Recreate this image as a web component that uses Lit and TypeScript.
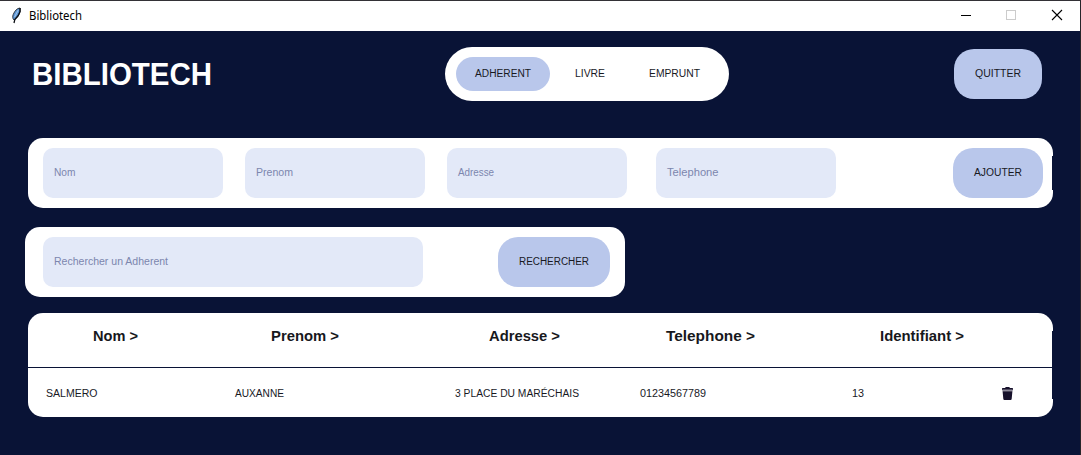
import { LitElement, html, css, svg } from "lit";
import { customElement } from "lit/decorators.js";

interface Label { text: string; x: number; w: number; }

// x: gap before the label, w: rendered width of the label
const tabs: Label[] = [
  { text: "LIVRE", x: 25, w: 30 },
  { text: "EMPRUNT", x: 44, w: 51 },
];
const fields: Label[] = [
  { text: "Nom", x: 15, w: 21.5 },
  { text: "Prenom", x: 22, w: 37 },
  { text: "Adresse", x: 22, w: 36 },
  { text: "Telephone", x: 29, w: 51.5 },
];
const heads: Label[] = [
  { text: "Nom >", x: 65, w: 45 },
  { text: "Prenom >", x: 243, w: 68 },
  { text: "Adresse >", x: 461, w: 71 },
  { text: "Telephone >", x: 638, w: 89 },
  { text: "Identifiant >", x: 852, w: 84 },
];
const cells: Label[] = [
  { text: "SALMERO", x: 18, w: 51.5 },
  { text: "AUXANNE", x: 207, w: 49 },
  { text: "3 PLACE DU MARÉCHAIS", x: 427, w: 124 },
  { text: "01234567789", x: 612, w: 66 },
  { text: "13", x: 824, w: 12 },
];

// Space between the end of the previous label and the start of this one
const gapBefore = (list: Label[], i: number) =>
  i === 0 ? list[0].x : list[i].x - list[i - 1].x - list[i - 1].w;

const fit = (text: string, w: number, cls: string) => svg`
  <svg class=${"fit " + cls} width=${Math.ceil(w)} height="20">
    <text x="0" y=${cls === "small" || cls === "hint" ? 13 : 14} textLength=${w} lengthAdjust="spacingAndGlyphs">${text}</text>
  </svg>`;

@customElement("app-root")
export class AppRoot extends LitElement {
  static styles = css`
    :host { display: block; width: 1081px; height: 455px; overflow: hidden; font-family: "Liberation Sans", Arial, sans-serif; }
    .window { box-sizing: border-box; width: 1081px; height: 455px; background: #091336; border-right: 1px solid #27262a; border-top: 1px solid #333136; display: flex; flex-direction: column; }
    svg { display: block; flex: none; }
    .fit { overflow: visible; }
    .fit text { white-space: pre; }
    .small { font-size: 10px; fill: #18191f; }
    .hint { font-size: 10px; fill: #7c86ae; }
    .bold { font-size: 15px; font-weight: bold; fill: #17181c; }
    .caption { font-size: 12px; font-family: "Noto Sans", "Open Sans", sans-serif; fill: #000; }
    .title { font-size: 31px; font-weight: bold; fill: #fff; }
    .bar { height: 30px; flex: none; background: #fff; display: flex; align-items: center; padding-left: 8px; }
    .bar .caption { margin-left: 5px; }
    .controls { margin-left: auto; }
    .header { height: 107px; flex: none; display: flex; align-items: flex-start; box-sizing: border-box; padding: 16px 38px 0 32px; }
    .brand { width: 413px; padding-top: 24px; }
    .tabs { box-sizing: border-box; width: 284px; height: 54px; border-radius: 27px; background: #fff; display: flex; align-items: center; padding-left: 11px; }
    .button { box-sizing: border-box; flex: none; height: 50px; border-radius: 20px; background: #b9c7eb; display: flex; align-items: center; justify-content: center; }
    .active { width: 94px; height: 34px; border-radius: 17px; }
    .quit { width: 88px; margin: 2px 0 0 auto; }
    .panel { position: relative; box-sizing: border-box; flex: none; background: #fff; border-radius: 15px; display: flex; align-items: center; }
    .notched::after { content: ""; position: absolute; top: 18px; right: 0; bottom: 18px; width: 1px; background: #091336; }
    .add { width: 1025px; height: 70px; margin-left: 28px; padding-right: 10px; }
    .search { width: 600px; height: 70px; margin: 19px 0 0 25px; padding: 0 15px 0 18px; }
    .field { box-sizing: border-box; flex: none; width: 180px; height: 50px; border-radius: 10px; background: #e3e9f8; display: flex; align-items: center; padding-left: 11px; }
    .wide { width: 380px; }
    .end { margin-left: auto; }
    .ajouter { width: 90px; }
    .rechercher { width: 112px; }
    .table { width: 1025px; height: 104px; margin: 16px 0 0 28px; flex-direction: column; align-items: stretch; }
    .row { display: flex; box-sizing: border-box; width: 1024px; }
    .heads { height: 55px; padding-top: 14px; border-bottom: 1px solid #091336; }
    .cells { height: 49px; padding-top: 16px; }
    .trash { margin: 3px 18px 0 138px; }
  `;

  private labels(list: Label[], cls: string) {
    return list.map((l, i) => html`<div style="margin-left:${gapBefore(list, i)}px;width:${l.w}px">${fit(l.text, l.w, cls)}</div>`);
  }

  render() {
    return html`
      <div class="window">
        <div class="bar">
          <svg width="16" height="18" viewBox="0 0 16 18">
            <path d="M12 1 C9 1.2 6.8 3.8 5.2 7.5 C4.4 9.8 4.5 11.5 6 13 C9 11.5 11 8.5 12 4.5 Z" fill="#5d96d4" stroke="#20262f" stroke-width=".9"/>
            <path d="M12.1 1 V4.5 Q10.8 9 6.8 12.6 L6 16" fill="none" stroke="#0c0f14" stroke-width="1.3"/>
            <path d="M10.2 3 L6.6 10" stroke="#a9cbee" stroke-width=".9"/>
          </svg>
          ${fit("Bibliotech", 53, "caption")}
          <svg class="controls" width="120" height="30" viewBox="960 1 120 30" fill="none" shape-rendering="crispEdges">
            <path d="M961 15.5 H971" stroke="#000"/>
            <rect x="1006.5" y="10.5" width="9" height="9" stroke="#ccc"/>
            <path d="M1052 10 L1062 20 M1062 10 L1052 20" stroke="#000" stroke-width="1.1" shape-rendering="auto"/>
          </svg>
        </div>
        <div class="header">
          <div class="brand">${fit("BIBLIOTECH", 180, "title")}</div>
          <div class="tabs">
            <div class="button active">${fit("ADHERENT", 56, "small")}</div>
            ${tabs.map(t => html`<div style="margin-left:${t.x}px;width:${t.w}px">${fit(t.text, t.w, "small")}</div>`)}
          </div>
          <div class="button quit">${fit("QUITTER", 46, "small")}</div>
        </div>
        <div class="panel add notched">
          ${fields.map(f => html`<div class="field" style="margin-left:${f.x}px">${fit(f.text, f.w, "hint")}</div>`)}
          <div class="button ajouter end">${fit("AJOUTER", 48, "small")}</div>
        </div>
        <div class="panel search">
          <div class="field wide">${fit("Rechercher un Adherent", 114, "hint")}</div>
          <div class="button rechercher end">${fit("RECHERCHER", 70, "small")}</div>
        </div>
        <div class="panel table notched">
          <div class="row heads">${this.labels(heads, "bold")}</div>
          <div class="row cells">
            ${this.labels(cells, "small")}
            <svg class="trash" width="12" height="14" viewBox="0 0 12 14">
              <path d="M0 2.9 V1.6 Q0 1 .7 1 H3 L3.8 0.1 H7.2 L8 1 H10.3 Q11 1 11 1.6 V2.9 Z" fill="#17112b"/>
              <path d="M0.3 2.5 H10.7 V4.2 H0.3 Z" fill="#8f8b9b"/>
              <path d="M0.6 4.2 H10.4 L9.7 11.8 Q9.6 13 8.6 13 H2.4 Q1.4 13 1.3 11.8 Z" fill="#17112b"/>
            </svg>
          </div>
        </div>
      </div>`;
  }
}
